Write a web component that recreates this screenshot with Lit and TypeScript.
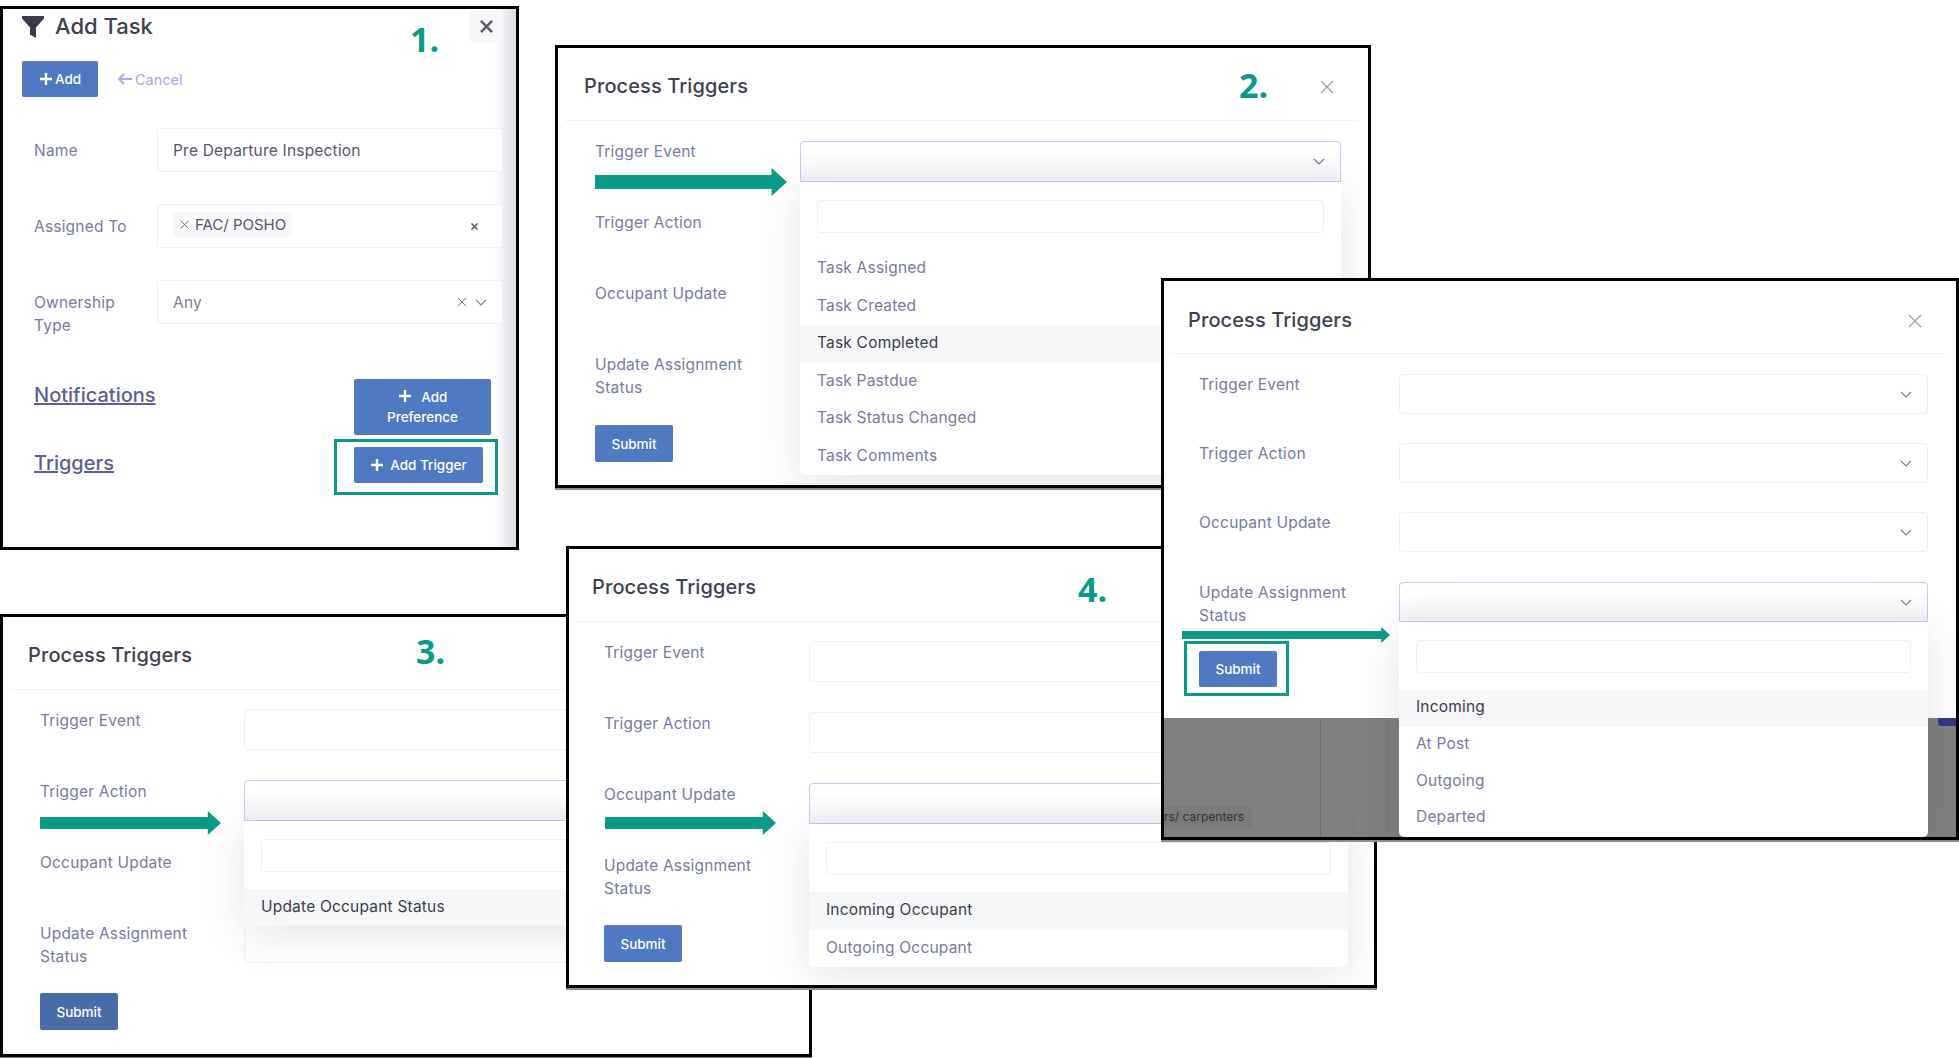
import { LitElement, html, css, svg, nothing } from 'lit';
import { customElement, property } from 'lit/decorators.js';

const FIELDS = ['Trigger Event', 'Trigger Action', 'Occupant Update', 'Update Assignment Status'];

const base = css`
  * { box-sizing: border-box; }
  button { font: inherit; border: 0; margin: 0; }
  .frame {
    width: 100%;
    height: 100%;
    border: 3px solid #000;
    background: #fff;
    overflow: hidden;
    position: relative;
    font-family: Inter, 'Liberation Sans', sans-serif;
  }
  .step {
    position: absolute;
    font: 700 34px/34px 'Open Sans', sans-serif;
    color: #0a9a87;
  }
  .btn {
    background: #4f79c0;
    color: #fff;
    border-radius: 2px;
    font-size: 13.5px;
    font-weight: 500;
  }
  .callout { position: relative; }
  .callout::after {
    content: '';
    position: absolute;
    border: 3px solid #0a9a87;
  }
`;

const chevron = html`<svg width="12" height="7" viewBox="0 0 12 7"><polyline points="1,1 6,6 11,1" fill="none" stroke="#77788a" stroke-width="1.1"/></svg>`;
const cross = (size: number, color: string, w: number) => html`<svg width=${size} height=${size} viewBox="0 0 14 14"><path d="M1 1 13 13M13 1 1 13" stroke=${color} stroke-width=${w} fill="none"/></svg>`;
const plus = (size: number) => html`<svg width=${size} height=${size} viewBox="0 0 14 14"><path d="M7 1v12M1 7h12" stroke="#fff" stroke-width="2.4" fill="none"/></svg>`;

@customElement('process-panel')
export class ProcessPanel extends LitElement {
  static styles = [base, css`
    :host { display: block; position: absolute; isolation: isolate; box-shadow: 0 2px 0 #8c8c8c; }
    .head {
      height: 73px;
      margin: 0 var(--rule-r, 10px) 0 var(--rule-l, 7px);
      padding: var(--head-top, 3px) var(--close-r, 24px) 0 var(--title-l, 19px);
      border-bottom: 1px solid #f2f2f5;
      display: flex;
      align-items: center;
      justify-content: space-between;
    }
    .head svg { margin-top: 2px; }
    h2 { margin: 0; font-size: 20px; font-weight: 500; color: #3e3f50; letter-spacing: 0.1px; }
    .body { padding: var(--body-top, 20px) var(--body-r, 27px) 0 var(--label-x, 37px); }
    .row {
      display: grid;
      grid-template-columns: var(--label-w, 205px) 1fr;
      grid-template-rows: var(--row-h, 41px);
      height: var(--row-h, 41px);
      margin-bottom: var(--row-gap, 30px);
    }
    .row.last { margin-top: var(--last-gap, 0); }
    .label { padding-top: var(--label-top, 0); font-size: 15.5px; letter-spacing: 0.2px; line-height: 22.5px; color: #777aa3; width: 170px; }
    .field { position: relative; }
    .select {
      height: 100%;
      border: 1px solid #f0f0f4;
      border-radius: 4px;
      display: flex;
      align-items: center;
      justify-content: flex-end;
      padding-right: 15px;
      background: #fff;
    }
    .open .select {
      border-color: #c6c9f2;
      border-radius: 4px 4px 0 0;
      background: linear-gradient(#fff 25%, #f3f3f6);
    }
    .menu {
      position: absolute;
      z-index: 2;
      top: 100%;
      left: 0;
      right: 0;
      background: #fff;
      border-radius: 0 0 5px 5px;
      box-shadow: 0 8px 44px rgba(50, 50, 90, 0.13);
      padding-top: 18px;
    }
    .search {
      height: 33px;
      margin: 0 17px 17px;
      border: 1px solid #f0f0f4;
      border-radius: 4px;
    }
    .opt {
      height: var(--opt-h, 37.5px);
      line-height: calc(var(--opt-h, 37.5px) - 2px);
      padding-left: 17px;
      font-size: 15.5px;
      letter-spacing: 0.2px;
      color: #777aa3;
    }
    .opt.on { background: #f6f7f9; color: #3b3c4a; }
    .submit { width: 78px; height: var(--submit-h, 37px); display: block; background: var(--submit-bg, #4f79c0); }
    .submit-wrap { width: 78px; }
    .submit-wrap.callout::after { inset: -10px -12px -9px -15px; }
    .arrow { position: absolute; z-index: 3; display: block; }
    .backdrop {
      position: absolute;
      left: 0;
      right: 0;
      top: 437px;
      bottom: 0;
      background: #808080;
      z-index: 0;
    }
    .backdrop i { display: block; width: 1px; height: 100%; background: #7a7a7a; position: absolute; top: 0; }
    .backdrop i:first-child { background: #707070; }
    .chip { position: absolute; left: 0; top: 88px; font-size: 12px; line-height: 22px; padding: 0 8px 0 0; color: #333; background: #7a7a7a; border-radius: 4px; white-space: nowrap; }
    .navy { position: absolute; right: 0; top: 0; width: 18px; height: 8px; background: #2f3a80; border-radius: 0 0 0 3px; }
    .body, .head { position: relative; z-index: 1; }
  `];

  @property() step = '';
  @property({ type: Number }) stepX = 0;
  @property({ type: Number }) stepY = 0;
  @property({ type: Array }) arrow: number[] = [];
  @property({ type: Number }) openRow = -1;
  @property({ type: Array }) options: string[] = [];
  @property({ type: Number }) active = 0;
  @property({ type: Boolean }) backdrop = false;
  @property({ type: Boolean }) callout = false;

  renderArrow() {
    const [x, y, w, h] = this.arrow;
    const head = h * 0.55;
    const points = `0,${h * 0.25} ${w - head},${h * 0.25} ${w - head},0 ${w},${h / 2} ${w - head},${h} ${w - head},${h * 0.75} 0,${h * 0.75}`;
    return html`<svg class="arrow" style="left:${x}px;top:${y}px" width=${w} height=${h} viewBox="0 0 ${w} ${h}">${svg`<polygon points=${points} fill="#0a9a87"/>`}</svg>`;
  }

  render() {
    return html`
      <div class="frame">
        ${this.backdrop ? html`
          <div class="backdrop">
            <i style="left:156px"></i><i style="left:189px"></i><i style="left:223px"></i>
            <span class="chip">rs/ carpenters</span>
            <span class="navy"></span>
          </div>` : nothing}
        <div class="head">
          <h2>Process Triggers</h2>
          ${cross(14, '#a3a3a8', 1.4)}
        </div>
        <div class="body">
          ${FIELDS.map((name, i) => html`
            <div class="row ${i === 3 ? 'last' : ''}">
              <div class="label">${name}</div>
              <div class="field ${i === this.openRow ? 'open' : ''}">
                <div class="select">${chevron}</div>
                ${i === this.openRow ? html`
                  <div class="menu">
                    <div class="search"></div>
                    ${this.options.map((o, j) => html`<div class="opt ${j === this.active ? 'on' : ''}">${o}</div>`)}
                  </div>` : nothing}
              </div>
            </div>`)}
          <div class="submit-wrap ${this.callout ? 'callout' : ''}">
            <button class="btn submit">Submit</button>
          </div>
        </div>
        ${this.arrow.length ? this.renderArrow() : nothing}
        ${this.step ? html`<span class="step" style="left:${this.stepX}px;top:${this.stepY}px">${this.step}</span>` : nothing}
      </div>
    `;
  }
}

@customElement('add-task-panel')
export class AddTaskPanel extends LitElement {
  static styles = [base, css`
    :host { display: block; position: absolute; isolation: isolate; }
    .frame { background: linear-gradient(to left, #dcdce4, #fff 22px); padding: 0 13px 0 19px; }
    .head { height: 33px; margin-top: 1px; display: flex; align-items: center; }
    .funnel { width: 22px; height: 22px; margin-right: 11px; }
    h2 { margin: 0 0 2px; font-size: 22px; font-weight: 500; color: #3e3f50; flex: 1; }
    .close { width: 33px; height: 33px; background: #f7f7f9; border-radius: 3px; display: flex; align-items: center; justify-content: center; }
    .actions { display: flex; align-items: center; gap: 20px; margin-top: 18px; }
    .add { width: 76px; height: 36px; display: flex; align-items: center; justify-content: center; gap: 2px; font-size: 13.5px; }
    .cancel { display: flex; align-items: center; gap: 3px; font-size: 14.5px; color: #a3aae3; }
    .form { margin-top: 31px; }
    .row { display: grid; grid-template-columns: 135px 1fr; grid-template-rows: 44px; height: 44px; margin-bottom: 32px; }
    .label { padding: 11px 0 0 12px; font-size: 15.5px; letter-spacing: 0.2px; line-height: 23px; color: #777aa3; width: 120px; }
    .input { border: 1px solid #f0f0f4; border-radius: 4px; display: flex; align-items: center; gap: 9px; padding: 0 15px; font-size: 15.5px; letter-spacing: 0.2px; color: #55566a; background: #fff; }
    .chip { height: 25px; margin-top: -3px; display: flex; align-items: center; gap: 6px; padding: 0 6px 0 7px; background: #f8f8fa; border-radius: 3px; font-size: 15px; letter-spacing: 0; }
    .spacer { flex: 1; }
    .clear { margin-right: 9px; display: flex; }
    .any { color: #7c7d8e; gap: 8px; }
    .sections { margin-top: 55px; padding-left: 12px; }
    .section { display: grid; grid-template-columns: 320px auto; justify-content: start; align-items: start; margin-bottom: 12px; }
    .section a { font-size: 20px; line-height: 30px; padding-top: 1px; font-weight: 500; color: #5d5f8f; text-decoration: underline; }
    .pref { width: 137px; height: 56px; line-height: 20px; font-size: 13.5px; padding: 6px 0; display: block; text-align: center; }
    .pref svg, .trig svg { vertical-align: -1px; margin-right: 6px; }
    .trig { width: 129px; height: 36px; display: flex; align-items: center; justify-content: center; font-size: 13.5px; }
    .trig-wrap { width: 129px; }
    .trig-wrap.callout::after { inset: -8px -15px -12px -20px; }
  `];

  render() {
    return html`
      <div class="frame">
        <div class="head">
          <svg class="funnel" viewBox="0 0 22 22"><path d="M0 0h22v2.5l-8 9V22l-6-3.5v-7l-8-9z" fill="#3a3a4c"/></svg>
          <h2>Add Task</h2>
          <div class="close">${cross(13, '#5a5a62', 2.6)}</div>
        </div>
        <div class="actions">
          <button class="btn add">${plus(14)}Add</button>
          <span class="cancel">
            <svg width="14" height="12" viewBox="0 0 14 12"><path d="M6 1 1 6l5 5M1 6h13" fill="none" stroke="#a3aae3" stroke-width="1.8"/></svg>Cancel
          </span>
        </div>
        <div class="form">
          <div class="row">
            <div class="label">Name</div>
            <div class="input">Pre Departure Inspection</div>
          </div>
          <div class="row">
            <div class="label">Assigned To</div>
            <div class="input">
              <span class="chip">${cross(9, '#6a6a78', 1.3)}FAC/ POSHO</span>
              <span class="spacer"></span>
              <span class="clear">${cross(7, '#55556a', 3)}</span>
            </div>
          </div>
          <div class="row">
            <div class="label">Ownership Type</div>
            <div class="input any">
              Any<span class="spacer"></span>
              ${cross(10, '#77788a', 1.4)}${chevron}
            </div>
          </div>
        </div>
        <div class="sections">
          <div class="section">
            <a>Notifications</a>
            <button class="btn pref">${plus(14)} Add<br />Preference</button>
          </div>
          <div class="section">
            <a>Triggers</a>
            <div class="trig-wrap callout"><button class="btn trig">${plus(14)} Add Trigger</button></div>
          </div>
        </div>
        <span class="step" style="left:407px;top:13px">1.</span>
      </div>
    `;
  }
}

@customElement('app-root')
export class AppRoot extends LitElement {
  static styles = css`
    :host { display: block; position: relative; width: 1959px; height: 1058px; overflow: hidden; background: #fff; }
    .task { left: 0; top: 6px; width: 519px; height: 544px; }
    .p2 { left: 555px; top: 45px; width: 816px; height: 443px; }
    .p3 { left: 0; top: 614px; width: 812px; height: 443px; --submit-bg: #4a6ca8; --opt-h: 37px; --label-w: 204px; --title-l: 18px; --rule-l: 7px; --body-top: 19px; --label-top: 1px; }
    .p4 { left: 566px; top: 546px; width: 811px; height: 442px; --opt-h: 37.5px; --label-x: 35px; --label-w: 205px; --title-l: 16px; --body-top: 19px; --body-r: 26px; --label-top: 1px; }
    .p5 { left: 1161px; top: 278px; width: 798px; height: 562px; --row-h: 40px; --row-gap: 29px; --opt-h: 36.8px; --label-x: 35px; --label-w: 200px; --title-l: 18px; --rule-l: 6px; --rule-r: 9px; --close-r: 25px; --last-gap: 30px; --submit-h: 36px; --body-r: 28px; --head-top: 5px; }
  `;

  render() {
    return html`
      <add-task-panel class="task"></add-task-panel>
      <process-panel class="p3" step="3." .stepX=${413} .stepY=${17} .arrow=${[37, 194, 181, 24]} .openRow=${1}
        .options=${['Update Occupant Status']}></process-panel>
      <process-panel class="p2" step="2." .stepX=${681} .stepY=${20} .arrow=${[37, 120, 192, 28]} .openRow=${0} .active=${2}
        .options=${['Task Assigned', 'Task Created', 'Task Completed', 'Task Pastdue', 'Task Status Changed', 'Task Comments']}></process-panel>
      <process-panel class="p4" step="4." .stepX=${509} .stepY=${23} .arrow=${[36, 262, 171, 24]} .openRow=${2}
        .options=${['Incoming Occupant', 'Outgoing Occupant']}></process-panel>
      <process-panel class="p5" .arrow=${[18, 346, 208, 16]} .openRow=${3} backdrop callout
        .options=${['Incoming', 'At Post', 'Outgoing', 'Departed']}></process-panel>
    `;
  }
}
